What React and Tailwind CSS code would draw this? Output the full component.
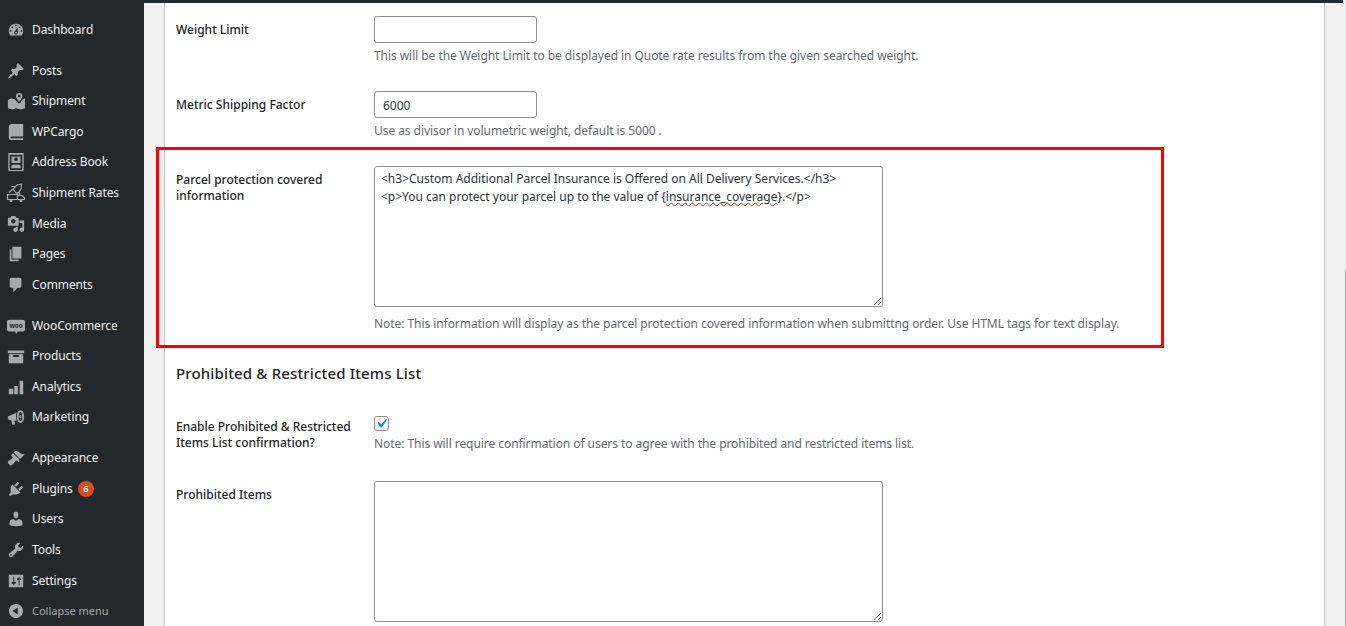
const paths = {
  dashboard: 'M3.76 16h12.48c1.1-1.37 1.76-3.11 1.76-5 0-4.42-3.58-8-8-8s-8 3.58-8 8c0 1.89.66 3.63 1.76 5zM10 4c.55 0 1 .45 1 1s-.45 1-1 1-1-.45-1-1 .45-1 1-1zM6 6c.55 0 1 .45 1 1s-.45 1-1 1-1-.45-1-1 .45-1 1-1zm8 0c.55 0 1 .45 1 1s-.45 1-1 1-1-.45-1-1 .45-1 1-1zm-5.37 5.55L12 7v6c0 1.1-.9 2-2 2s-2-.9-2-2c0-.57.24-1.08.63-1.45zM4 10c.55 0 1 .45 1 1s-.45 1-1 1-1-.45-1-1 .45-1 1-1zm12 0c.55 0 1 .45 1 1s-.45 1-1 1-1-.45-1-1 .45-1 1-1zm-5 3c0-.55-.45-1-1-1s-1 .45-1 1 .45 1 1 1 1-.45 1-1z',
  posts: 'M10.44 3.02l1.82-1.82 6.36 6.35-1.83 1.82c-1.05-.68-2.48-.57-3.41.36l-.75.75c-.92.93-1.04 2.35-.35 3.41l-1.83 1.82-2.41-2.41-2.8 2.79c-.42.42-3.38 2.71-3.8 2.29s1.86-3.39 2.28-3.81l2.79-2.79L4.1 9.36l1.83-1.82c1.05.69 2.48.57 3.4-.36l.75-.75c.93-.92 1.05-2.35.36-3.41z',
  shipment: 'M1 9l4-2 4 1.2 3.6 4.3h1.8L17.5 8 20 7v11l-5 1.5-5-1.5-4 1.5L1 18zM13.5 1a3.5 3.5 0 0 1 3.5 3.5c0 2.5-3.5 6.5-3.5 6.5S10 7 10 4.5A3.5 3.5 0 0 1 13.5 1zm0 2a1.5 1.5 0 1 0 0 3 1.5 1.5 0 0 0 0-3z',
  book: 'M5 17h13v2H5c-1.66 0-3-1.34-3-3V4c0-1.66 1.34-3 3-3h13v14H5c-.55 0-1 .45-1 1s.45 1 1 1z',
  address: 'M2.5 0h15a1 1 0 0 1 1 1v19a1 1 0 0 1-1 1h-15a1 1 0 0 1-1-1V1a1 1 0 0 1 1-1zm.5 2v17h14V2zM5 4h10v7H5zm5 .8a2.1 2.1 0 1 0 0 4.2 2.1 2.1 0 0 0 0-4.2zM5 13h10v4H5z',
  media: 'M13 11V4c0-.55-.45-1-1-1h-1.67L9 1H5L3.67 3H2c-.55 0-1 .45-1 1v7c0 .55.45 1 1 1h10c.55 0 1-.45 1-1zM7 4.5c1.38 0 2.5 1.12 2.5 2.5S8.38 9.5 7 9.5 4.5 8.38 4.5 7 5.62 4.5 7 4.5zM14 6h5v10.5c0 1.38-1.12 2.5-2.5 2.5S14 17.88 14 16.5s1.12-2.5 2.5-2.5c.17 0 .34.02.5.05V9h-3V6zm-4 8.05V13h2v3.5c0 1.38-1.12 2.5-2.5 2.5S7 17.88 7 16.5 8.12 14 9.5 14c.17 0 .34.02.5.05z',
  pages: 'M6 15V2h10v13H6zm-1 1h8v2H3V5h2v11z',
  comments: 'M5 2h9c1.1 0 2 .9 2 2v7c0 1.1-.9 2-2 2h-2l-5 5v-5H5c-1.1 0-2-.9-2-2V4c0-1.1.9-2 2-2z',
  products: 'M19 4v3H1V4h18zM2 8h16v10H2V8zm11 3V9H7v2h6z',
  analytics: 'M2 12h5v6H2zM8 9h4v9H8zM14 3h4v15h-4z',
  marketing: 'M1 9.5L11 5c-.8 1.4-1 3-1 4.5s.4 3.3 1.2 4.5l-3 .2.8 3.8-3 .8-1.2-5L1 12.5zM15 2.5c2.4 0 4 3.2 4 7s-1.6 7-4 7-4-3.2-4-7 1.6-7 4-7zm0 2c-1.2 0-2 2.3-2 5s.8 5 2 5 2-2.3 2-5-.8-5-2-5zm0 3a1.2 2 0 1 1 0 4 1.2 2 0 0 1 0-4z',
  appearance: 'M14.48 11.06L7.41 3.99l1.5-1.5c.5-.56 2.3-.47 3.51.32 1.21.8 1.43 1.28 2.91 2.1 1.18.64 2.45 1.26 4.45.85zm-.71.71L6.7 4.7 4.93 6.47c-.39.39-.39 1.02 0 1.41l1.06 1.06c.39.39.39 1.03 0 1.42-.6.6-1.43 1.11-2.21 1.69-.35.26-.7.53-1.01.84C1.43 13.23.4 14.4 1.2 15.6c.5.8 1.6 2.1 2.7 2.6 1 .4 2-.7 3.3-2 .3-.3.6-.7.8-1 .6-.8 1.1-1.6 1.7-2.2.4-.4 1-.4 1.4 0l1.06 1.06c.39.39 1.02.39 1.41 0z',
  plugins: 'M13.11 4.36L9.87 7.6 8 5.73l3.24-3.24c.35-.34 1.05-.2 1.56.32.52.51.66 1.21.31 1.55zm-8 1.77l.91-1.12 9.01 9.01-1.19.84c-.71.71-2.63 1.16-3.82 1.16H6.14L4.9 17.26c-.59.59-1.54.59-2.12 0-.59-.58-.59-1.53 0-2.12l1.24-1.24v-3.88c0-1.13.4-3.19 1.09-3.89zm7.26 3.97l3.24-3.24c.34-.35 1.04-.21 1.55.31.52.51.66 1.21.31 1.55l-3.24 3.25z',
  users: 'M10 9.25c-2.27 0-2.73-3.44-2.73-3.44C7 4.02 7.82 2 9.97 2c2.16 0 2.98 2.02 2.71 3.81 0 0-.41 3.44-2.68 3.44zm0 2.57L12.72 10c2.39 0 4.52 2.33 4.52 4.53v2.49s-3.65 1.13-7.24 1.13c-3.65 0-7.24-1.13-7.24-1.13v-2.49c0-2.25 1.94-4.48 4.47-4.48z',
  tools: 'M16.68 9.77c-1.34 1.34-3.3 1.67-4.95.99l-5.41 6.52c-.99.99-2.59.99-3.58 0s-.99-2.59 0-3.57l6.52-5.42c-.68-1.65-.35-3.61.99-4.95 1.28-1.28 3.12-1.62 4.72-1.06l-2.89 2.89 2.82 2.82 2.86-2.87c.53 1.58.18 3.39-1.08 4.65zM3.81 16.21c.4.39 1.04.39 1.43 0 .4-.4.4-1.04 0-1.43-.39-.4-1.03-.4-1.43 0-.39.39-.39 1.03 0 1.43z',
  settings: 'M18 16V4c0-.55-.45-1-1-1H3c-.55 0-1 .45-1 1v12c0 .55.45 1 1 1h14c.55 0 1-.45 1-1zM8 11h1c.55 0 1 .45 1 1s-.45 1-1 1H8v1.5c0 .28-.22.5-.5.5s-.5-.22-.5-.5V13H6c-.55 0-1-.45-1-1s.45-1 1-1h1V5.5c0-.28.22-.5.5-.5s.5.22.5.5V11zm5-2h-1c-.55 0-1-.45-1-1s.45-1 1-1h1V5.5c0-.28.22-.5.5-.5s.5.22.5.5V7h1c.55 0 1 .45 1 1s-.45 1-1 1h-1v5.5c0 .28-.22.5-.5.5s-.5-.22-.5-.5V9z',
  collapse: 'M10 2.16c4.33 0 7.84 3.51 7.84 7.84s-3.51 7.84-7.84 7.84S2.16 14.33 2.16 10 5.71 2.16 10 2.16zm2 11.72V6.12L6.18 9.97z',
}

const menuGroups = [
  [{ label: 'Dashboard', icon: 'dashboard' }],
  [
    { label: 'Posts', icon: 'posts' },
    { label: 'Shipment', icon: 'shipment' },
    { label: 'WPCargo', icon: 'book' },
    { label: 'Address Book', icon: 'address' },
    { label: 'Shipment Rates', icon: 'rates' },
    { label: 'Media', icon: 'media' },
    { label: 'Pages', icon: 'pages' },
    { label: 'Comments', icon: 'comments' },
  ],
  [
    { label: 'WooCommerce', icon: 'woo' },
    { label: 'Products', icon: 'products' },
    { label: 'Analytics', icon: 'analytics' },
    { label: 'Marketing', icon: 'marketing' },
  ],
  [
    { label: 'Appearance', icon: 'appearance' },
    { label: 'Plugins', icon: 'plugins', badge: 6 },
    { label: 'Users', icon: 'users' },
    { label: 'Tools', icon: 'tools' },
    { label: 'Settings', icon: 'settings' },
  ],
]

function MenuIcon({ name }) {
  if (name === 'woo') {
    return (
      <svg viewBox="0 0 20 20" className="w-[18px] h-[18px] shrink-0 text-[#a7aaad]" aria-hidden="true">
        <path fill="currentColor" d="M2 3h16a2 2 0 0 1 2 2v9a2 2 0 0 1-2 2h-6l-2 2.5L9 16H2a2 2 0 0 1-2-2V5a2 2 0 0 1 2-2z" />
        <text x="10" y="12" textAnchor="middle" fontSize="7" fontWeight="700" fill="#23282d">woo</text>
      </svg>
    )
  }
  if (name === 'rates') {
    return (
      <svg viewBox="0 0 20 20" className="w-[20px] h-[20px] shrink-0 -mx-[1px] text-[#a7aaad]" fill="none" stroke="currentColor" strokeWidth="1.2" aria-hidden="true">
        <path d="M3 9.5l4-3.5 4-4 4.5-1-.5 5-2 3-3 2M7 6l4 5M9 3.5L5.5 3.5M13.5 9v3" />
        <path d="M1.5 11.5h10v5h-10zM11.5 12.5h4.5l2.5 2.5v1.5h-7z" />
        <circle cx="5" cy="17.5" r="1.5" fill="currentColor" stroke="none" />
        <circle cx="15" cy="17.5" r="1.5" fill="currentColor" stroke="none" />
      </svg>
    )
  }
  return (
    <svg viewBox="0 0 20 20" className="w-[18px] h-[18px] shrink-0 text-[#a7aaad]" aria-hidden="true">
      <path fill="currentColor" fillRule="evenodd" d={paths[name]} />
    </svg>
  )
}

function Sidebar() {
  return (
    <aside className="w-36 shrink-0 h-full bg-[#23282d] pt-[14.6px] text-[12px] tracking-[-0.1px] text-[#f0f0f1]">
      {menuGroups.map((group, i) => (
        <div key={i} className={i > 0 ? 'mt-[10.2px]' : ''}>
          {group.map((item) => (
            <div key={item.label} className="h-[30.6px] flex items-center pl-[7px]">
              <MenuIcon name={item.icon} />
              <span className="ml-[7px] whitespace-nowrap">{item.label}</span>
              {item.badge && (
                <span className="ml-[5px] w-4 h-4 rounded-full bg-[#d54e21] text-white text-[9px] font-semibold flex items-center justify-center">
                  {item.badge}
                </span>
              )}
            </div>
          ))}
        </div>
      ))}
      <div className="h-[30.6px] flex items-center pl-[7px] text-[11px] tracking-normal text-[#a7aaad]">
        <MenuIcon name="collapse" />
        <span className="ml-[7px]">Collapse menu</span>
      </div>
    </aside>
  )
}

function Row({ label, className = '', children }) {
  return (
    <div className={`flex ${className}`}>
      <label className="w-[198px] shrink-0 pt-[6px] pr-4 leading-[16px] text-[#1d2327] font-medium">{label}</label>
      <div className="flex-1 min-w-0">{children}</div>
    </div>
  )
}

function Hint({ className = '', children }) {
  return <p className={`leading-[18px] tracking-[-0.06px] text-[#646970] whitespace-nowrap ${className}`}>{children}</p>
}

const inputClass = 'block w-[163px] h-[27px] px-2 pt-px border border-[#8c8f94] rounded-[3px] bg-white text-[#2c3338] text-[12px] outline-none'

export default function App() {
  return (
    <div className="relative flex w-[1346px] h-[626px] overflow-hidden bg-[#f0f0f1] text-[12px] [font-family:'Noto_Sans',sans-serif]">
      <Sidebar />
      <main className="flex-1 min-w-0 h-full flex flex-col">
        <div className="h-[3px] w-[1199px] bg-[#23282d] shrink-0" />
        <div className="flex-1 ml-5 mr-[21px] bg-white border-x border-[#c3c4c7] pl-[11px] pt-[13px]">
          <Row label="Weight Limit">
            <input className={inputClass} />
            <Hint className="mt-[4px]">This will be the Weight Limit to be displayed in Quote rate results from the given searched weight.</Hint>
          </Row>
          <Row label="Metric Shipping Factor" className="mt-[26px]">
            <input className={inputClass} defaultValue="6000" />
            <Hint className="mt-[4px]">Use as divisor in volumetric weight, default is 5000 .</Hint>
          </Row>
          <Row label="Parcel protection covered information" className="mt-[26px]">
            <div className="w-[509px] h-[141px] border border-[#8c8f94] rounded-[3px] px-[6px] pt-[3px] leading-[18px] text-[#2c3338] resize overflow-auto whitespace-nowrap">
              {'<h3>Custom Additional Parcel Insurance is Offered on All Delivery Services.</h3>'}
              <br />
              {'<p>You can protect your parcel up to the value of {'}
              <span className="underline decoration-wavy decoration-[#e02020] decoration-1">insurance_coverage</span>
              {'}.</p>'}
            </div>
            <Hint className="mt-[8px]">Note: This information will display as the parcel protection covered information when submittng order. Use HTML tags for text display.</Hint>
          </Row>
          <h2 className="mt-[30px] text-[15px] leading-5 font-medium tracking-[0.15px] text-[#1d2327]">Prohibited &amp; Restricted Items List</h2>
          <Row label="Enable Prohibited & Restricted Items List confirmation?" className="mt-[30px]">
            <span className="mt-[3px] w-[15px] h-[15px] border border-[#8c8f94] rounded-[3px] bg-white flex items-center justify-center">
              <svg viewBox="0 0 20 20" className="w-[19px] h-[19px] shrink-0 text-[#2f86c1]" aria-hidden="true">
                <path fill="currentColor" d="M14.83 4.89l1.34.94-5.81 8.38H9.02L5.78 9.67l1.34-1.25 2.57 2.4z" />
              </svg>
            </span>
            <Hint className="mt-[4px]">Note: This will require confirmation of users to agree with the prohibited and restricted items list.</Hint>
          </Row>
          <Row label="Prohibited Items" className="mt-[28px]">
            <textarea className="block w-[509px] h-[141px] border border-[#8c8f94] rounded-[3px] bg-white outline-none" />
          </Row>
        </div>
      </main>
      {/* sliver of the scrollbar thumb at the window edge */}
      <div className="absolute right-0 top-[270px] bottom-0 w-px bg-[#a3a3a3]" />
      {/* red annotation drawn over the screenshot */}
      <div className="absolute left-[156px] top-[147px] w-[1008px] h-[201px] border-[3px] border-[#ff0000] pointer-events-none" />
    </div>
  )
}
